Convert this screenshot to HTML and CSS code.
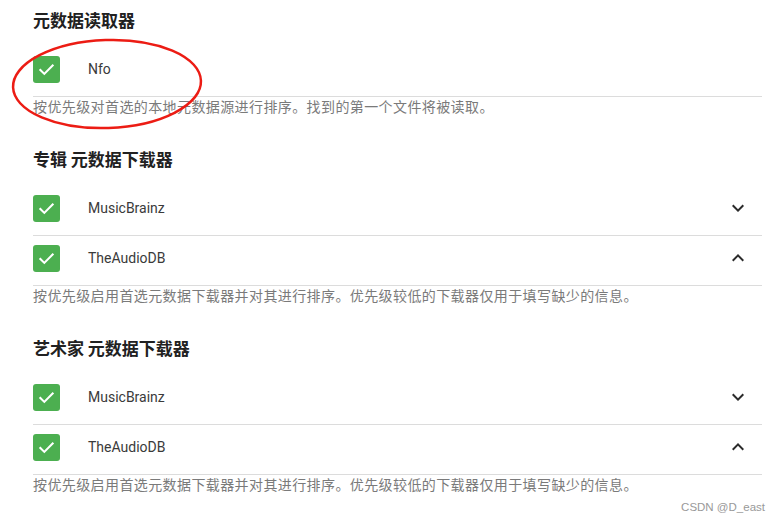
FILE: index.html
```html
<!DOCTYPE html>
<html>
<head>
  <meta charset="utf-8">
  <title>元数据设置</title>
  <link rel="stylesheet" href="styles.css">
</head>
<body>
  <div class="page">
    <div class="section">
      <h2 class="section-title">元数据读取器</h2>
      <div class="list">
        <div class="item">
          <span class="check">
            <svg viewBox="0 0 24 24"><path d="M5 12.5l4.5 4.5L19 7.5"/></svg>
          </span>
          <span class="item-name">Nfo</span>
        </div>
      </div>
      <p class="hint">按优先级对首选的本地元数据源进行排序。找到的第一个文件将被读取。</p>
    </div>

    <div class="section">
      <h2 class="section-title">专辑 元数据下载器</h2>
      <div class="list">
        <div class="item">
          <span class="check">
            <svg viewBox="0 0 24 24"><path d="M5 12.5l4.5 4.5L19 7.5"/></svg>
          </span>
          <span class="item-name">MusicBrainz</span>
          <span class="arrow">
            <svg viewBox="0 0 24 24"><path d="M7.41 8.59L12 13.17l4.59-4.58L18 10l-6 6-6-6 1.41-1.41z"/></svg>
          </span>
        </div>
        <div class="item">
          <span class="check">
            <svg viewBox="0 0 24 24"><path d="M5 12.5l4.5 4.5L19 7.5"/></svg>
          </span>
          <span class="item-name">TheAudioDB</span>
          <span class="arrow">
            <svg viewBox="0 0 24 24"><path d="M7.41 15.41L12 10.83l4.59 4.58L18 14l-6-6-6 6z"/></svg>
          </span>
        </div>
      </div>
      <p class="hint">按优先级启用首选元数据下载器并对其进行排序。优先级较低的下载器仅用于填写缺少的信息。</p>
    </div>

    <div class="section">
      <h2 class="section-title">艺术家 元数据下载器</h2>
      <div class="list">
        <div class="item">
          <span class="check">
            <svg viewBox="0 0 24 24"><path d="M5 12.5l4.5 4.5L19 7.5"/></svg>
          </span>
          <span class="item-name">MusicBrainz</span>
          <span class="arrow">
            <svg viewBox="0 0 24 24"><path d="M7.41 8.59L12 13.17l4.59-4.58L18 10l-6 6-6-6 1.41-1.41z"/></svg>
          </span>
        </div>
        <div class="item">
          <span class="check">
            <svg viewBox="0 0 24 24"><path d="M5 12.5l4.5 4.5L19 7.5"/></svg>
          </span>
          <span class="item-name">TheAudioDB</span>
          <span class="arrow">
            <svg viewBox="0 0 24 24"><path d="M7.41 15.41L12 10.83l4.59 4.58L18 14l-6-6-6 6z"/></svg>
          </span>
        </div>
      </div>
      <p class="hint">按优先级启用首选元数据下载器并对其进行排序。优先级较低的下载器仅用于填写缺少的信息。</p>
    </div>

    <!-- hand-drawn highlight around the Nfo row -->
    <svg class="mark" viewBox="0 0 200 96">
      <ellipse cx="95" cy="47" rx="94" ry="44" transform="rotate(-2 95 47)"/>
    </svg>

    <div class="watermark">CSDN @D_east</div>
  </div>
</body>
</html>
```

FILE: styles.css
```css
:root {
  --green: #4caf50;
  --text: #212121;
  --text-item: #3a3a3a;
  --text-hint: #7a7a7a;
  --border: #dcdcdc;
}

* {
  margin: 0;
  padding: 0;
  box-sizing: border-box;
}

body {
  width: 780px;
  height: 521px;
  background: #ffffff;
  font-family: Roboto, 'Noto Sans CJK SC', sans-serif;
  color: var(--text);
  overflow: hidden;
}

.page {
  position: relative;
  height: 521px;
  padding: 8px 18px 0 33px;
}

.section {
  margin-bottom: 31px;
}

.section-title {
  font-family: 'Noto Sans CJK SC', sans-serif;
  font-size: 17px;
  line-height: 24px;
  font-weight: 700;
  color: var(--text);
  margin-bottom: 15px;
}

.item {
  display: flex;
  align-items: flex-start;
  padding: 9px 0 13px;
  border-bottom: 1px solid var(--border);
}

.check {
  width: 27px;
  height: 27px;
  border-radius: 3px;
  background: var(--green);
  display: flex;
  align-items: center;
  justify-content: center;
  flex-shrink: 0;
}

.check svg {
  width: 21px;
  height: 21px;
  fill: none;
  stroke: #ffffff;
  stroke-width: 2.4;
  stroke-linecap: square;
}

.item-name {
  flex: 1;
  margin-left: 28px;
  font-size: 14px;
  line-height: 27px;
  color: var(--text-item);
}

.arrow {
  width: 24px;
  height: 24px;
  margin: 1px 12px 0 0;
}

.arrow svg {
  width: 24px;
  height: 24px;
  fill: #2b2b2b;
}

.hint {
  font-family: 'Noto Sans CJK SC', sans-serif;
  font-size: 14px;
  line-height: 19px;
  letter-spacing: 0.4px;
  color: var(--text-hint);
}

.mark {
  position: absolute;
  left: 12px;
  top: 37px;
  width: 200px;
  height: 96px;
  overflow: visible;
}

.mark ellipse {
  fill: none;
  stroke: #ec1c14;
  stroke-width: 2.5;
}

.watermark {
  position: absolute;
  right: 15px;
  bottom: 8px;
  font-family: 'Liberation Sans', Arial, sans-serif;
  font-size: 11.5px;
  color: #999999;
}
```
